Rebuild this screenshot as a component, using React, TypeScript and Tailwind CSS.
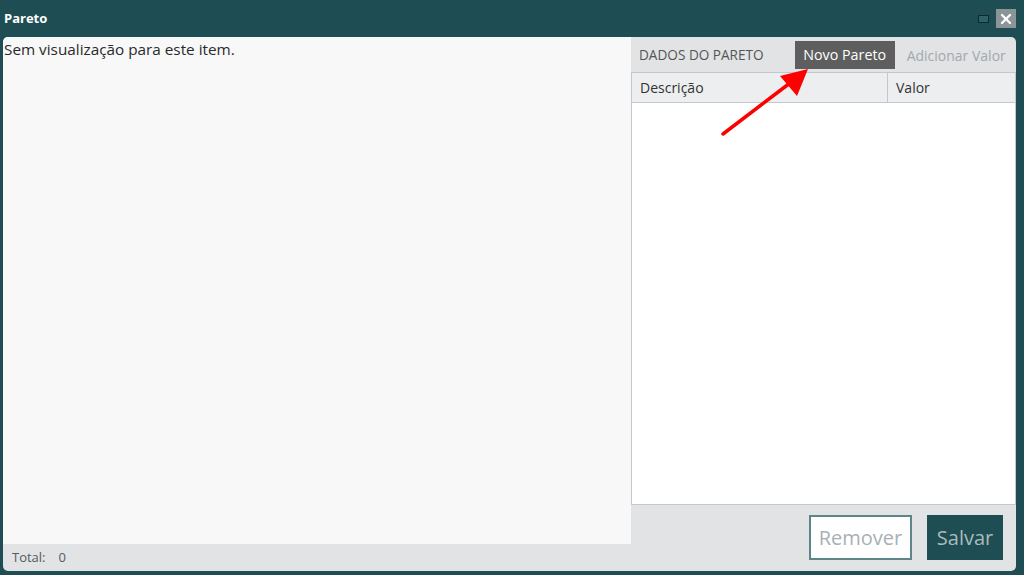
import { X } from 'lucide-react';

const font = { fontFamily: '"Open Sans", "Noto Sans", sans-serif' };

function TitleBar() {
  return (
    <div className="flex h-[37px] shrink-0 items-center justify-between pl-[4px] pr-[8px]">
      <span className="text-[13px] font-bold text-white">Pareto</span>
      <div className="flex items-center gap-[7px]">
        <div className="mt-[1px] h-[8px] w-[11px] border border-[#0d2a2e] bg-[#2f6066]" />
        <button className="flex h-[19px] w-[20px] items-center justify-center bg-[#8c9596]">
          <X className="h-[16px] w-[16px] text-white" strokeWidth={3.5} />
        </button>
      </div>
    </div>
  );
}

function DataTable() {
  return (
    <div className="flex flex-1 flex-col border border-[#c4c8cc] bg-white">
      <div className="flex h-[30px] shrink-0 border-b border-[#c4c8cc] bg-[#eceef0] text-[14px] text-[#333]">
        <div className="flex w-[256px] items-center border-r border-[#c4c8cc] pl-[8px]">Descrição</div>
        <div className="flex flex-1 items-center pl-[8px]">Valor</div>
      </div>
      <div className="flex-1" />
    </div>
  );
}

export default function App() {
  return (
    <div className="relative flex h-[575px] w-[1024px] flex-col bg-[#1e4d53]" style={font}>
      <TitleBar />
      <div className="mb-[4px] ml-[3px] mr-[8px] flex flex-1 overflow-hidden rounded-[5px] bg-[#e1e3e5]">
        <div className="flex w-[628px] flex-col">
          <div className="flex-1 bg-[#f7f8f7] pl-px pt-[1px] text-[15.3px] text-[#2a2a2a]">
            Sem visualização para este item.
          </div>
          <div className="flex h-[27px] shrink-0 items-center gap-[13px] pl-[9px] text-[13px] text-[#555b60]">
            <span>Total:</span>
            <span>0</span>
          </div>
        </div>
        <div className="flex flex-1 flex-col">
          <div className="flex h-[35px] shrink-0 items-start pt-[4px]">
            <span className="mt-[4px] pl-[8px] text-[13.6px] text-[#555]">DADOS DO PARETO</span>
            <button className="ml-[31px] h-[28px] w-[100px] bg-[#5e5e5e] text-[14.3px] text-white">Novo Pareto</button>
            <span className="ml-[12px] mt-[4px] text-[14px] text-[#a4a8ac]">Adicionar Valor</span>
          </div>
          <DataTable />
          <div className="flex h-[66px] shrink-0 items-start justify-end gap-[15px] pr-[13px] pt-[10px]">
            <button className="h-[45px] w-[103px] border-2 border-[#5c8689] bg-white text-[20px] text-[#a8b0b4]">Remover</button>
            <button className="h-[45px] w-[76px] bg-[#1e4d53] text-[20px] text-[#a9bcbd]">Salvar</button>
          </div>
        </div>
      </div>
      <svg className="pointer-events-none absolute left-0 top-0" width="1024" height="575">
        <line x1="723" y1="134" x2="790" y2="83" stroke="#f00" strokeWidth="3.5" strokeLinecap="round" />
        <polygon points="808,69 780,76 797,96" fill="#f00" />
      </svg>
    </div>
  );
}
